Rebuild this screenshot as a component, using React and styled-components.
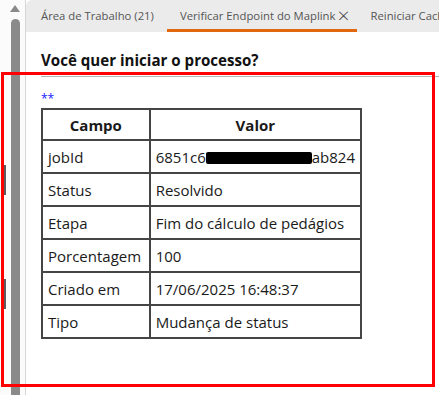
import React from 'react';
import styled, { createGlobalStyle } from 'styled-components';

const GlobalStyle = createGlobalStyle`
  html, body {
    margin: 0;
    padding: 0;
    background: #ffffff;
    overflow: hidden;
  }
  body {
    font-family: "Open Sans", "Noto Sans", "Liberation Sans", sans-serif;
  }
`;

const Page = styled.div`
  position: relative;
  display: flex;
  width: 439px;
  height: 395px;
  overflow: hidden;
`;

const LeftRail = styled.div`
  position: relative;
  width: 26px;
  flex-shrink: 0;
  background: #fbfbfb;
  border-right: 1px solid #d6d6d6;
  display: flex;
  flex-direction: column;
  align-items: center;
  padding-top: 5px;
  box-sizing: border-box;
`;

const ScrollArrow = styled.div`
  width: 0;
  height: 0;
  border-left: 5px solid transparent;
  border-right: 5px solid transparent;
  border-bottom: 7px solid #8a8a8a;
  margin-left: 5px;
`;

const ScrollThumb = styled.div`
  flex: 1;
  width: 9px;
  margin-left: 5px;
  margin-top: 7px;
  background: #8a8a8a;
  border-radius: 5px 5px 0 0;
`;

const EdgeMark = styled.div`
  position: absolute;
  left: 4px;
  top: ${p => p.$top}px;
  width: 2px;
  height: 30px;
  background: #5c5c5c;
`;

const Main = styled.div`
  flex: 1;
  display: flex;
  flex-direction: column;
  min-width: 0;
`;

const TabBar = styled.div`
  display: flex;
  height: 32px;
  background: #ebebeb;
  border-top-left-radius: 6px;
  padding-left: 2px;
  white-space: nowrap;
  overflow: hidden;
`;

const Tab = styled.div`
  display: flex;
  align-items: center;
  flex-shrink: 0;
  padding: 2px ${p => (p.$active ? '8px' : '13px')} 0 13px;
  font-size: 11.3px;
  color: #555;
  border-bottom: 3px solid ${p => (p.$active ? '#e2680f' : 'transparent')};
  box-sizing: border-box;
`;

const CloseMark = styled.span`
  align-self: flex-start;
  margin-top: 3px;
  margin-left: 2px;
  font-size: 21px;
  font-weight: 300;
  line-height: 1;
  color: #444;
`;

const Content = styled.div`
  padding: 18px 0 0 15px;
`;

const Heading = styled.h2`
  margin: 0;
  font-size: 15.1px;
  font-weight: 700;
  color: #111;
  line-height: 20px;
`;

const Divider = styled.hr`
  margin: 6px 0 0 0;
  border: 0;
  border-top: 1px solid #b5b5b5;
`;

const Stars = styled.div`
  margin-top: 15px;
  font-size: 12px;
  color: #2020ff;
  line-height: 14px;
`;

const Table = styled.table`
  margin-top: 2px;
  border-collapse: collapse;
  width: 321px;
  font-size: 15px;
  color: #1a1a1a;
`;

const Th = styled.th`
  border: 2px solid #454545;
  height: 31px;
  padding: 0 6px;
  font-weight: 700;
  text-align: center;
  box-sizing: border-box;
`;

const Td = styled.td`
  border: 2px solid #454545;
  height: 31px;
  padding: 0 5px;
  text-align: left;
  white-space: nowrap;
  width: ${p => p.$w || 'auto'};
`;

const Redacted = styled.span`
  display: inline-block;
  width: 106px;
  height: 12px;
  background: #000;
  vertical-align: -1px;
  border-radius: 2px;
`;

const Annotation = styled.div`
  position: absolute;
  left: 1px;
  top: 72px;
  width: 434px;
  height: 315px;
  border: 3px solid #ff0000;
  box-sizing: border-box;
  pointer-events: none;
`;

const rows = [
  ['jobId', null],
  ['Status', 'Resolvido'],
  ['Etapa', 'Fim do cálculo de pedágios'],
  ['Porcentagem', '100'],
  ['Criado em', '17/06/2025 16:48:37'],
  ['Tipo', 'Mudança de status'],
];

export default function App() {
  return (
    <Page>
      <GlobalStyle />
      <LeftRail>
        <ScrollArrow />
        <ScrollThumb />
        <EdgeMark $top={165} />
        <EdgeMark $top={279} />
      </LeftRail>
      <Main>
        <TabBar>
          <Tab>Área de Trabalho (21)</Tab>
          <Tab $active>
            Verificar Endpoint do Maplink<CloseMark>×</CloseMark>
          </Tab>
          <Tab>Reiniciar Cache</Tab>
        </TabBar>
        <Content>
          <Heading>Você quer iniciar o processo?</Heading>
          <Divider />
          <Stars>**</Stars>
          <Table>
            <thead>
              <tr>
                <Th>Campo</Th>
                <Th>Valor</Th>
              </tr>
            </thead>
            <tbody>
              {rows.map(([k, v]) => (
                <tr key={k}>
                  <Td $w="96px">{k}</Td>
                  <Td>
                    {v === null ? (
                      <>
                        6851c6<Redacted />ab824
                      </>
                    ) : (
                      v
                    )}
                  </Td>
                </tr>
              ))}
            </tbody>
          </Table>
        </Content>
      </Main>
      <Annotation />
    </Page>
  );
}
